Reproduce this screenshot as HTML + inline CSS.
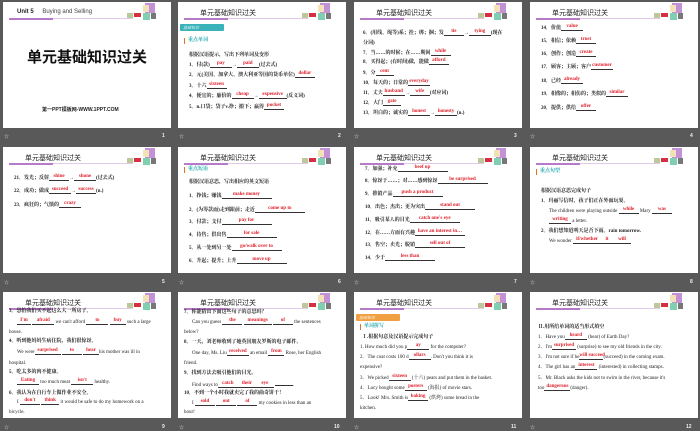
<!DOCTYPE html>
<html><head><meta charset="utf-8"><style>
*{margin:0;padding:0;box-sizing:border-box}
body{width:700px;height:431px;background:#595959;position:relative;overflow:hidden;font-family:"Liberation Serif","Noto Serif CJK SC",serif}
.s{position:absolute;width:168px;height:126px;background:#fff;overflow:hidden}
.t{position:absolute;left:22px;top:6px;font:7px "Liberation Sans","Noto Sans CJK SC",sans-serif;color:#222}
.bar{position:absolute;left:6px;top:16px;width:124px;height:1px;background:#e2c8ea}
.bar:before{content:"";position:absolute;left:0;top:-0.5px;width:44px;height:2px;background:#b77ac8}
.d1{position:absolute;left:142px;top:1px;width:10px;height:10px;background:#c391d6}
.d2{position:absolute;left:140px;top:3px;width:6px;height:7px;background:#f3e2b8}
.d3{position:absolute;left:140px;top:11px;width:7px;height:7px;background:#7fcfb0}
.d4{position:absolute;left:148px;top:11px;width:5px;height:6px;background:#777}
.d5{position:absolute;left:124px;top:11px;width:6px;height:5px;background:#bcc79a}
.d6{position:absolute;left:131px;top:11px;width:7px;height:4px;background:#d43040}
.l{position:absolute;white-space:nowrap;font-size:5px;font-weight:bold;color:#222;line-height:6px}
.a{color:#e0202a;position:relative;top:-2px;font-weight:bold}
.b{display:inline-block;border-bottom:0.6px solid #333;height:5px;vertical-align:baseline;text-align:center}
.bn{position:absolute;left:2px;top:4px;width:44px;height:7px;background:#39b3b9;border-radius:1px}
.bn span{font-size:4px;color:#fff;position:absolute;left:3px;top:0.5px;font-style:italic}
.k{position:absolute;left:6px;font-size:5px;color:#20a6ae;font-weight:bold;white-space:nowrap;border-left:1.3px solid #e8701f;padding-left:3px;line-height:6px}
.n{position:absolute;color:#eee;font:bold 5px "Liberation Sans",sans-serif}
.st{position:absolute;color:#ccc;font-size:5px}
</style></head><body>

<!-- slide 1 -->
<div class="s" style="left:3px;top:2px">
<div class="l" style="left:14px;top:7px;font:bold 6px 'Liberation Sans',sans-serif">Unit 5 <span style="font-weight:normal;margin-left:7px;color:#444">Buying and Selling</span></div>
<div class="bar"></div><div class="d1"></div><div class="d2"></div><div class="d3"></div><div class="d4"></div><div class="d5"></div><div class="d6"></div>
<div class="l" style="left:24px;top:46px;font:bold 15px 'Noto Sans CJK SC',sans-serif;line-height:18px;color:#111">单元基础知识过关</div>
<div class="l" style="left:39px;top:104px;font:bold 5px 'Liberation Sans','Noto Sans CJK SC',sans-serif">第一PPT模板网-WWW.1PPT.COM</div>
</div>

<!-- slide 2 -->
<div class="s" style="left:178px;top:2px">
<div class="t">单元基础知识过关</div><div class="bar"></div><div class="d1"></div><div class="d2"></div><div class="d3"></div><div class="d4"></div><div class="d5"></div><div class="d6"></div>
<div class="bn" style="top:22px"><span>基础知识</span></div>
<div class="k" style="top:36px">重点单词</div>
<div class="l" style="left:11px;top:51px">根据汉语提示，写出下列单词及变形</div>
<div class="l" style="left:11px;top:61px">1．付(款)<span class="b" style="width:22px"><span class="a">pay</span></span>→<span class="b" style="width:22px"><span class="a">paid</span></span>(过去式)</div>
<div class="l" style="left:11px;top:71px">2．元(美国、加拿大、澳大利亚等国的货币单位)<span class="b" style="width:20px"><span class="a">dollar</span></span></div>
<div class="l" style="left:11px;top:82px">3．十六<span class="b" style="width:20px"><span class="a">sixteen</span></span></div>
<div class="l" style="left:11px;top:92px">4．便宜的；廉价的<span class="b" style="width:22px"><span class="a">cheap</span></span>→<span class="b" style="width:28px"><span class="a">expensive</span></span>(反义词)</div>
<div class="l" style="left:11px;top:103px">5．n.口袋；袋子v.挣；搬下；赢得<span class="b" style="width:20px"><span class="a">pocket</span></span></div>
</div>

<!-- slide 3 -->
<div class="s" style="left:354px;top:2px">
<div class="t">单元基础知识过关</div><div class="bar"></div><div class="d1"></div><div class="d2"></div><div class="d3"></div><div class="d4"></div><div class="d5"></div><div class="d6"></div>
<div class="l" style="left:9px;top:29px">6．(用线、绳等)系；拴；绑；捆；发<span class="b" style="width:20px"><span class="a">tie</span></span>→<span class="b" style="width:22px"><span class="a">tying</span></span>(现在</div>
<div class="l" style="left:9px;top:39px">分词)</div>
<div class="l" style="left:9px;top:49px">7．当……的时候；在……期间<span class="b" style="width:20px"><span class="a">while</span></span></div>
<div class="l" style="left:9px;top:58px">8．买得起；(有时间)做，能做<span class="b" style="width:20px"><span class="a">afford</span></span></div>
<div class="l" style="left:9px;top:69px">9．分<span class="b" style="width:18px"><span class="a">cent</span></span></div>
<div class="l" style="left:9px;top:79px">10．每天的；日常的<span class="b" style="width:22px"><span class="a">everyday</span></span></div>
<div class="l" style="left:9px;top:89px">11．丈夫<span class="b" style="width:22px"><span class="a">husband</span></span>→<span class="b" style="width:20px"><span class="a">wife</span></span>(对应词)</div>
<div class="l" style="left:9px;top:99px">12．大门<span class="b" style="width:18px"><span class="a">gate</span></span></div>
<div class="l" style="left:9px;top:109px">13．坦白的；诚实的<span class="b" style="width:22px"><span class="a">honest</span></span>→<span class="b" style="width:22px"><span class="a">honesty</span></span>(n.)</div>
</div>

<!-- slide 4 -->
<div class="s" style="left:530px;top:2px">
<div class="t">单元基础知识过关</div><div class="bar"></div><div class="d1"></div><div class="d2"></div><div class="d3"></div><div class="d4"></div><div class="d5"></div><div class="d6"></div>
<div class="l" style="left:11px;top:24px">14．价值<span class="b" style="width:22px"><span class="a">value</span></span></div>
<div class="l" style="left:11px;top:37px">15．相信；依赖<span class="b" style="width:20px"><span class="a">trust</span></span></div>
<div class="l" style="left:11px;top:50px">16．创作；创造<span class="b" style="width:20px"><span class="a">create</span></span></div>
<div class="l" style="left:11px;top:63px">17．顾客；主顾；客户<span class="b" style="width:22px"><span class="a">customer</span></span></div>
<div class="l" style="left:11px;top:77px">18．已经<span class="b" style="width:22px"><span class="a">already</span></span></div>
<div class="l" style="left:11px;top:90px">19．相像的；相仿的；类似的<span class="b" style="width:22px"><span class="a">similar</span></span></div>
<div class="l" style="left:11px;top:104px">20．提供；供给<span class="b" style="width:20px"><span class="a">offer</span></span></div>
</div>

<!-- slide 5 -->
<div class="s" style="left:3px;top:147px">
<div class="t">单元基础知识过关</div><div class="bar"></div><div class="d1"></div><div class="d2"></div><div class="d3"></div><div class="d4"></div><div class="d5"></div><div class="d6"></div>
<div class="l" style="left:11px;top:29px">21．发光；反射<span class="b" style="width:20px"><span class="a">shine</span></span>→<span class="b" style="width:22px"><span class="a">shone</span></span>(过去式)</div>
<div class="l" style="left:11px;top:42px">22．成功；做成<span class="b" style="width:22px"><span class="a">succeed</span></span>→<span class="b" style="width:20px"><span class="a">success</span></span>(n.)</div>
<div class="l" style="left:11px;top:56px">23．疯狂的；气愤的<span class="b" style="width:22px"><span class="a">crazy</span></span></div>
</div>

<!-- slide 6 -->
<div class="s" style="left:178px;top:147px">
<div class="t">单元基础知识过关</div><div class="bar"></div><div class="d1"></div><div class="d2"></div><div class="d3"></div><div class="d4"></div><div class="d5"></div><div class="d6"></div>
<div class="k" style="top:20px">重点短语</div>
<div class="l" style="left:11px;top:33px">根据汉语意思，写出相应的英文短语</div>
<div class="l" style="left:11px;top:47px">1．挣钱；赚钱<span class="b" style="width:50px"><span class="a">make money</span></span></div>
<div class="l" style="left:11px;top:61px">2．(为筹款而)走到跟前；走近<span class="b" style="width:50px"><span class="a">come up to</span></span></div>
<div class="l" style="left:11px;top:73px">3．付款；支付<span class="b" style="width:50px"><span class="a">pay for</span></span></div>
<div class="l" style="left:11px;top:86px">4．待售；供出售<span class="b" style="width:50px"><span class="a">for sale</span></span></div>
<div class="l" style="left:11px;top:99px">5．从一处到另一处<span class="b" style="width:50px"><span class="a">go/walk over to</span></span></div>
<div class="l" style="left:11px;top:112px">6．升起；提升；上升<span class="b" style="width:50px"><span class="a">move up</span></span></div>
</div>

<!-- slide 7 -->
<div class="s" style="left:354px;top:147px">
<div class="t">单元基础知识过关</div><div class="bar"></div><div class="d1"></div><div class="d2"></div><div class="d3"></div><div class="d4"></div><div class="d5"></div><div class="d6"></div>
<div class="l" style="left:11px;top:20px">7．加强；补充<span class="b" style="width:50px"><span class="a">beef up</span></span></div>
<div class="l" style="left:11px;top:32px">8．惊讶于……；对……感到惊讶<span class="b" style="width:50px"><span class="a">be surprised</span></span></div>
<div class="l" style="left:11px;top:45px">9．推销产品<span class="b" style="width:50px"><span class="a">push a product</span></span></div>
<div class="l" style="left:11px;top:58px">10．出色；杰出；更为突出<span class="b" style="width:50px"><span class="a">stand out</span></span></div>
<div class="l" style="left:11px;top:71px">11．吸引某人的目光<span class="b" style="width:50px"><span class="a">catch one's eye</span></span></div>
<div class="l" style="left:11px;top:84px">12．在……方面有兴趣<span class="b" style="width:50px"><span class="a">have an interest in…</span></span></div>
<div class="l" style="left:11px;top:96px">13．售空；卖光；脱销<span class="b" style="width:50px"><span class="a">sell out of</span></span></div>
<div class="l" style="left:11px;top:109px">14．少于<span class="b" style="width:50px"><span class="a">less than</span></span></div>
</div>

<!-- slide 8 -->
<div class="s" style="left:530px;top:147px">
<div class="t">单元基础知识过关</div><div class="bar"></div><div class="d1"></div><div class="d2"></div><div class="d3"></div><div class="d4"></div><div class="d5"></div><div class="d6"></div>
<div class="k" style="top:22px">重点句型</div>
<div class="l" style="left:11px;top:42px">根据汉语意思完成句子</div>
<div class="l" style="left:11px;top:52px">1．玛丽写信时，孩子们正在外面玩耍。</div>
<div class="l" style="left:19px;top:62px;font-weight:normal">The children were playing outside <span class="b" style="width:20px"><span class="a">while</span></span> Mary <span class="b" style="width:20px"><span class="a">was</span></span></div>
<div class="l" style="left:19px;top:72px;font-weight:normal"><span class="b" style="width:22px"><span class="a">writing</span></span> a letter.</div>
<div class="l" style="left:11px;top:82px">2．我们想知道明天是否下雨。rain tomorrow.</div>
<div class="l" style="left:19px;top:92px;font-weight:normal">We wonder <span class="b" style="width:28px"><span class="a">if/whether</span></span><span class="b" style="width:12px"><span class="a">it</span></span><span class="b" style="width:18px"><span class="a">will</span></span></div>
</div>

<!-- slide 9 -->
<div class="s" style="left:3px;top:292px">
<div class="t">单元基础知识过关</div><div class="bar"></div><div class="d1"></div><div class="d2"></div><div class="d3"></div><div class="d4"></div><div class="d5"></div><div class="d6"></div>
<div class="l" style="left:6px;top:17px">3．恐怕我们买不起这么大一所房子。</div>
<div class="l" style="left:14px;top:28px;font-weight:normal"><span class="b" style="width:14px"><span class="a">I'm</span></span> <span class="b" style="width:22px"><span class="a">afraid</span></span> we can't afford <span class="b" style="width:22px"><span class="a">to</span></span> <span class="b" style="width:16px"><span class="a">buy</span></span> such a large</div>
<div class="l" style="left:6px;top:38px;font-weight:normal">house.</div>
<div class="l" style="left:6px;top:47px">4．听到他妈妈生病住院，我们很惊讶。</div>
<div class="l" style="left:14px;top:58px;font-weight:normal">We were<span class="b" style="width:26px"><span class="a">surprised</span></span> <span class="b" style="width:20px"><span class="a">to</span></span> <span class="b" style="width:16px"><span class="a">hear</span></span>his mother was ill in</div>
<div class="l" style="left:6px;top:69px;font-weight:normal">hospital.</div>
<div class="l" style="left:6px;top:78px">5．吃太多的肉不健康。</div>
<div class="l" style="left:14px;top:88px;font-weight:normal"><span class="b" style="width:22px"><span class="a">Eating</span></span> too much meat <span class="b" style="width:22px"><span class="a">isn't</span></span> healthy.</div>
<div class="l" style="left:6px;top:99px">6．我认为在自行车上做作业不安全。</div>
<div class="l" style="left:14px;top:108px;font-weight:normal">I <span class="b" style="width:20px"><span class="a">don't</span></span> <span class="b" style="width:18px"><span class="a">think</span></span> it would be safe to do my homework on a</div>
<div class="l" style="left:6px;top:118px;font-weight:normal">bicycle.</div>
</div>

<!-- slide 10 -->
<div class="s" style="left:178px;top:292px">
<div class="t">单元基础知识过关</div><div class="bar"></div><div class="d1"></div><div class="d2"></div><div class="d3"></div><div class="d4"></div><div class="d5"></div><div class="d6"></div>
<div class="l" style="left:6px;top:18px">7．你能猜出下面这些句子的意思吗？</div>
<div class="l" style="left:14px;top:28px;font-weight:normal">Can you guess <span class="b" style="width:20px"><span class="a">the</span></span> <span class="b" style="width:28px"><span class="a">meanings</span></span> <span class="b" style="width:20px"><span class="a">of</span></span> the sentences</div>
<div class="l" style="left:6px;top:38px;font-weight:normal">below?</div>
<div class="l" style="left:6px;top:48px">8．一天，刘老师收到了她英国朋友罗斯的电子邮件。</div>
<div class="l" style="left:14px;top:59px;font-weight:normal">One day, Ms. Liu<span class="b" style="width:22px"><span class="a">received</span></span> an email <span class="b" style="width:16px"><span class="a">from</span></span> Rose, her English</div>
<div class="l" style="left:6px;top:69px;font-weight:normal">friend.</div>
<div class="l" style="left:6px;top:79px">9．找到方法去吸引他们的目光。</div>
<div class="l" style="left:14px;top:89px;font-weight:normal">Find ways to<span class="b" style="width:20px"><span class="a">catch</span></span><span class="b" style="width:18px"><span class="a">their</span></span><span class="b" style="width:18px"><span class="a">eye</span></span> <span class="b" style="width:18px"></span>.</div>
<div class="l" style="left:6px;top:99px">10．不到一个小时我就卖完了我的曲奇饼干！</div>
<div class="l" style="left:14px;top:109px;font-weight:normal">I <span class="b" style="width:20px"><span class="a">sold</span></span> <span class="b" style="width:20px"><span class="a">out</span></span> <span class="b" style="width:20px"><span class="a">of</span></span> my cookies in less than an</div>
<div class="l" style="left:6px;top:118px;font-weight:normal">hour!</div>
</div>

<!-- slide 11 -->
<div class="s" style="left:354px;top:292px">
<div class="t">单元基础知识过关</div><div class="bar"></div><div class="d1"></div><div class="d2"></div><div class="d3"></div><div class="d4"></div><div class="d5"></div><div class="d6"></div>
<div class="bn" style="top:22px;background:#f0a040"><span>基础知识</span></div>
<div class="k" style="top:32px">单词拼写</div>
<div class="l" style="left:8px;top:43px">Ⅰ.根据句意及汉语提示完成句子</div>
<div class="l" style="left:6px;top:53px;font-weight:normal">1. How much did you p<span class="b" style="width:22px"><span class="a">ay</span></span> for the computer?</div>
<div class="l" style="left:6px;top:63px;font-weight:normal">2．The coat costs 100 d<span class="b" style="width:22px"><span class="a">ollars</span></span>. Don't you think it is</div>
<div class="l" style="left:6px;top:73px;font-weight:normal">expensive?</div>
<div class="l" style="left:6px;top:84px;font-weight:normal">3．We picked<span class="b" style="width:22px"><span class="a">sixteen</span></span> (十六) pears and put them in the basket.</div>
<div class="l" style="left:6px;top:94px;font-weight:normal">4．Lucy bought some<span class="b" style="width:22px"><span class="a">posters</span></span> (海报) of movie stars.</div>
<div class="l" style="left:6px;top:104px;font-weight:normal">5．Look! Mrs. Smith is<span class="b" style="width:20px"><span class="a">baking</span></span> (烘烤) some bread in the</div>
<div class="l" style="left:6px;top:114px;font-weight:normal">kitchen.</div>
</div>

<!-- slide 12 -->
<div class="s" style="left:530px;top:292px">
<div class="t">单元基础知识过关</div><div class="bar"></div><div class="d1"></div><div class="d2"></div><div class="d3"></div><div class="d4"></div><div class="d5"></div><div class="d6"></div>
<div class="l" style="left:8px;top:33px">Ⅱ.用所给单词的适当形式填空</div>
<div class="l" style="left:8px;top:43px;font-weight:normal">1．Have you<span class="b" style="width:22px"><span class="a">heard</span></span> (hear) of Earth Day?</div>
<div class="l" style="left:8px;top:53px;font-weight:normal">2．I'm<span class="b" style="width:24px"><span class="a">surprised</span></span> (surprise) to see my old friends in the city.</div>
<div class="l" style="left:8px;top:63px;font-weight:normal">3．I'm not sure if he<span class="b" style="width:24px"><span class="a">will succeed</span></span>(succeed) in the coming exam.</div>
<div class="l" style="left:8px;top:73px;font-weight:normal">4．The girl has an<span class="b" style="width:22px"><span class="a">interest</span></span> (interested) in collecting stamps.</div>
<div class="l" style="left:8px;top:84px;font-weight:normal">5．Mr. Black asks the kids not to swim in the river, because it's</div>
<div class="l" style="left:8px;top:94px;font-weight:normal">too<span class="b" style="width:26px"><span class="a">dangerous</span></span>(danger).</div>
</div>

<!-- footers -->
<div class="st" style="left:4px;top:133px">☆</div><div class="n" style="left:162px;top:133px">1</div>
<div class="st" style="left:179px;top:133px">☆</div><div class="n" style="left:338px;top:133px">2</div>
<div class="st" style="left:354px;top:133px">☆</div><div class="n" style="left:514px;top:133px">3</div>
<div class="st" style="left:530px;top:133px">☆</div><div class="n" style="left:690px;top:133px">4</div>
<div class="st" style="left:4px;top:279px">☆</div><div class="n" style="left:162px;top:279px">5</div>
<div class="st" style="left:179px;top:279px">☆</div><div class="n" style="left:338px;top:279px">6</div>
<div class="st" style="left:354px;top:279px">☆</div><div class="n" style="left:514px;top:279px">7</div>
<div class="st" style="left:530px;top:279px">☆</div><div class="n" style="left:690px;top:279px">8</div>
<div class="st" style="left:4px;top:424px">☆</div><div class="n" style="left:162px;top:424px">9</div>
<div class="st" style="left:179px;top:424px">☆</div><div class="n" style="left:334px;top:424px">10</div>
<div class="st" style="left:354px;top:424px">☆</div><div class="n" style="left:511px;top:424px">11</div>
<div class="st" style="left:530px;top:424px">☆</div><div class="n" style="left:686px;top:424px">12</div>
</body></html>
